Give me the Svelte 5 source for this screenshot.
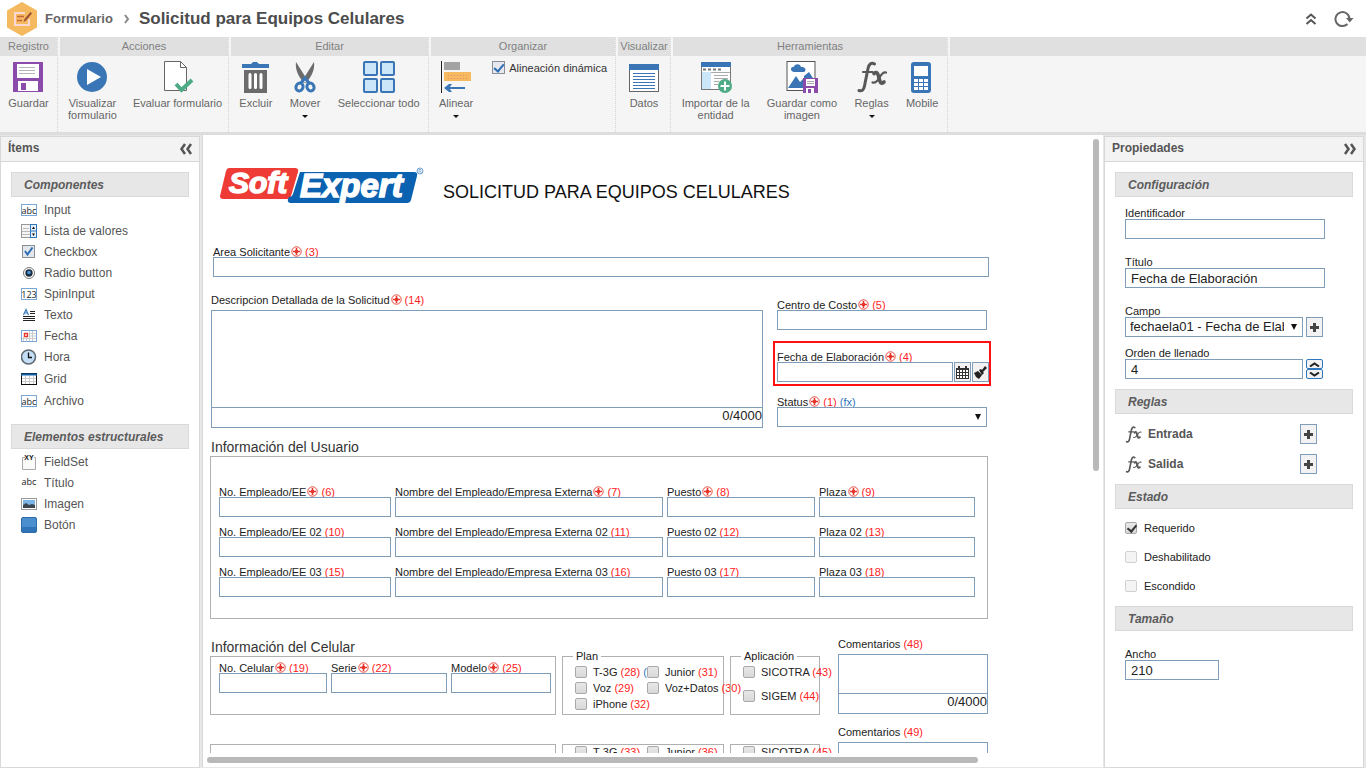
<script>
	let dynamicAlign = $state(true);
	let required = $state(true);
	let title = $state('Fecha de Elaboración');
	let order = $state(4);
	let width = $state('210');

	const components = [
		{ icon: 'input', name: 'Input' },
		{ icon: 'list', name: 'Lista de valores' },
		{ icon: 'check', name: 'Checkbox' },
		{ icon: 'radio', name: 'Radio button' },
		{ icon: 'spin', name: 'SpinInput' },
		{ icon: 'text', name: 'Texto' },
		{ icon: 'date', name: 'Fecha' },
		{ icon: 'hour', name: 'Hora' },
		{ icon: 'grid', name: 'Grid' },
		{ icon: 'input', name: 'Archivo' }
	];

	const structural = [
		{ icon: 'fieldset', name: 'FieldSet' },
		{ icon: 'title', name: 'Título' },
		{ icon: 'image', name: 'Imagen' },
		{ icon: 'button', name: 'Botón' }
	];

	const userFields = [
		{ label: 'No. Empleado/EE', n: 6, req: true },
		{ label: 'Nombre del Empleado/Empresa Externa', n: 7, req: true },
		{ label: 'Puesto', n: 8, req: true },
		{ label: 'Plaza', n: 9, req: true },
		{ label: 'No. Empleado/EE 02', n: 10 },
		{ label: 'Nombre del Empleado/Empresa Externa 02', n: 11 },
		{ label: 'Puesto 02', n: 12 },
		{ label: 'Plaza 02', n: 13 },
		{ label: 'No. Empleado/EE 03', n: 15 },
		{ label: 'Nombre del Empleado/Empresa Externa 03', n: 16 },
		{ label: 'Puesto 03', n: 17 },
		{ label: 'Plaza 03', n: 18 }
	];

	const phoneFields = [
		{ label: 'No. Celular', n: 19, req: true },
		{ label: 'Serie', n: 22, req: true },
		{ label: 'Modelo', n: 25, req: true }
	];
</script>

{#snippet mark()}
	<svg class="mark" width="11" height="11" viewBox="0 0 11 11">
		<circle cx="5.5" cy="5.5" r="4.7" fill="#fff" stroke="#e8352b" stroke-width="0.9" />
		<path d="M5.500 2v7M2 5.500h7" stroke="#e8352b" stroke-width="1.600" />
		<path d="M4 4h3v3H4z" fill="#e8352b" />
	</svg>
{/snippet}

{#snippet field(f)}
	<div class="field">
		<label for="f{f.n}">{f.label}{#if f.req}{@render mark()}{/if} <b>({f.n})</b></label>
		<input type="text" id="f{f.n}" />
	</div>
{/snippet}

{#snippet area(label, n, req)}
	<div class="field area">
		<label for="f{n}">{label}{#if req}{@render mark()}{/if} <b>({n})</b></label>
		<div class="counted">
			<textarea id="f{n}"></textarea>
			<span>0/4000</span>
		</div>
	</div>
{/snippet}

{#snippet tick(label, n, fx)}
	<label class="tick"><input type="checkbox" /><span>{label} <b>({n})</b>{#if fx}&nbsp;<i>(fx)</i>{/if}</span></label>
{/snippet}

{#snippet plus(label)}
	<button class="square" aria-label={label}>
		<svg width="11" height="11" viewBox="0 0 11 11"><path d="M5.500 1v9M1 5.500h9" stroke="#444" stroke-width="3" /></svg>
	</button>
{/snippet}

{#snippet fxIcon(w, h)}
	<svg width={w} height={h} viewBox="0 0 32 32" fill="none" stroke="#585858" stroke-linecap="round">
		<path d="M18.500 3c-3-2-5.500 0-6.500 4.500L8.500 25c-.8 4-2.500 5.500-5.500 4.500" stroke-width="3" />
		<path d="M7 11h9.500" stroke-width="2.200" />
		<path d="M18 12.500c3-2.500 4 0 5 4.500s2 6.500 5 4" stroke-width="3.600" />
		<path d="M30 11.500c-2.500-1-4.500 1.500-6.500 5s-4 6-7 5" stroke-width="2.200" />
	</svg>
{/snippet}

{#snippet itemIcon(kind)}
	<svg class="item-icon" width="16" height={kind === 'hour' || kind === 'grid' ? 18 : 16} viewBox="0 0 16 16">
		{#if kind === 'input'}
			<rect x="0.500" y="2.500" width="15" height="11" fill="#fff" stroke="#7ba7d7" />
			<text x="8" y="12" class="tiny">abc</text>
		{:else if kind === 'list'}
			<rect x="0.500" y="1.500" width="15" height="13" fill="#f4f4f4" stroke="#999" />
			<path d="M2 5.500h6M1 8.500h8M1 11.500h8" stroke="#bbb" />
			<rect x="9.500" y="1.500" width="6" height="13" fill="#e5f0fb" stroke="#2f77bd" />
			<path d="M9.500 8h6" stroke="#2f77bd" />
			<path d="M11 6l1.500-2.500L14 6zM11 10.500h3L12.500 13z" fill="#111" />
		{:else if kind === 'check'}
			<rect x="1.500" y="1.500" width="12" height="12" fill="#e2e7ee" stroke="#8a8f96" />
			<path d="M4 7l2.500 3.500 5-7" fill="none" stroke="#2f6db3" stroke-width="2" />
		{:else if kind === 'radio'}
			<circle cx="8" cy="8" r="5.500" fill="#fff" stroke="#777" />
			<circle cx="8" cy="8" r="3.700" fill="#1b2c40" />
			<circle cx="8" cy="7.500" r="1.800" fill="#4d94d6" />
		{:else if kind === 'spin'}
			<rect x="0.500" y="2.500" width="15" height="11" fill="#fff" stroke="#7ba7d7" />
			<text x="8" y="12" class="tiny">123</text>
		{:else if kind === 'text'}
			<path d="M2.500 8L5 2.500 7.500 8M3.500 6h3" fill="none" stroke="#3c7cc0" stroke-width="1.200" />
			<path d="M9 4.500h5M9 6.500h5M2 9.500h12M2 11.500h12M2 13.500h12" stroke="#222" />
		{:else if kind === 'date'}
			<rect x="0.500" y="2.500" width="15" height="11" fill="#fff" stroke="#7ba7d7" />
			<path d="M8.500 3v10M11.500 3v10M5.500 9v4M2.500 9v4M1 10.500h14M8 5.500h7M8 8h7" stroke="#ccc" />
			<rect x="3.500" y="5.500" width="3" height="3" fill="#fff" stroke="#e8352b" stroke-width="1.400" />
		{:else if kind === 'hour'}
			<circle cx="7.500" cy="8" r="7" fill="#c4dff5" stroke="#5f6a74" stroke-width="1.600" />
			<path d="M7.500 3.500v5h3.500" fill="none" stroke="#111" stroke-width="1.300" />
		{:else if kind === 'grid'}
			<rect x="0.500" y="2.500" width="15" height="11" fill="#fff" stroke="#111" />
			<path d="M4.500 5v8M8.500 5v8M12.500 5v8M1 7.500h14M1 10.500h14" stroke="#ccc" />
			<path d="M0 3.500h16" stroke="#1260a8" stroke-width="2" />
		{:else if kind === 'fieldset'}
			<path d="M4 3.500H1.500v12h13v-12H13" fill="#fafafa" stroke="#aaa" />
			<text x="8" y="6" class="xy">XY</text>
		{:else if kind === 'title'}
			<text x="8" y="10" class="tiny">abc</text>
		{:else if kind === 'image'}
			<rect x="0.500" y="2.500" width="15" height="11" fill="#fff" stroke="#999" />
			<rect x="2" y="4" width="12" height="8" fill="#7db4e6" />
			<path d="M2 12V9l3-2 3 2 3-1 3 1v3z" fill="#3d464f" />
		{:else if kind === 'button'}
			<rect x="0.500" y="0.500" width="15" height="15" rx="1.500" fill="#4b8fcf" stroke="#2c6cab" />
			<path d="M1 10h14v5H1z" fill="#2f74b8" />
		{/if}
	</svg>
{/snippet}

{#snippet itemList(items)}
	<ul>
		{#each items as item}
			<li>{@render itemIcon(item.icon)}{item.name}</li>
		{/each}
	</ul>
{/snippet}

<div class="app">
	<header>
		<svg width="30" height="34" viewBox="0 0 30 34">
			<path d="M15 1l14 8v16l-14 8-14-8V9z" fill="#f5b95f" stroke="#f5b95f" stroke-width="2" stroke-linejoin="round" />
			<path d="M22 17v6H8V11h10" fill="none" stroke="#fbd9d2" stroke-width="2" />
			<path d="M10 14.500h7M10 18.500h5" stroke="#c8643c" stroke-width="1.500" />
			<path d="M16.500 20l1-3 6-7 1.500 1.500-6 7z" fill="#9c5030" />
		</svg>
		<a href="#formulario">Formulario</a>
		<svg class="crumb" width="6" height="10" viewBox="0 0 6 10"><path d="M1 1l3 4-3 4" fill="none" stroke="#888" stroke-width="2" /></svg>
		<h1>Solicitud para Equipos Celulares</h1>
		<button class="plain" aria-label="Contraer">
			<svg width="12" height="14" viewBox="0 0 12 14" fill="none" stroke="#555" stroke-width="2"><path d="M1.500 6.500L6 2.500l4.500 4M1.500 12L6 8l4.500 4" /></svg>
		</button>
		<button class="plain" aria-label="Actualizar">
			<svg width="20" height="18" viewBox="0 0 20 18">
				<path d="M13.500 14A7 7 0 1 1 15.500 9" fill="none" stroke="#666" stroke-width="2" />
				<path d="M12 8h7.500l-3.700 4.500z" fill="#666" />
			</svg>
		</button>
	</header>

	<nav class="ribbon">
		<section class="g-registro">
			<h2>Registro</h2>
			<div class="tools">
				<button class="tool">
					<svg width="32" height="32" viewBox="0 0 32 32">
						<path d="M1 1h30v30H1z" fill="#8b4bab" />
						<path d="M5 3h22v14H5z" fill="#fff" />
						<path d="M7 6.500h16M7 9.500h16M7 12.500h16" stroke="#b5b5b5" />
						<path d="M6 20h20v10H6z" fill="#fff" />
						<path d="M9 22h5v7H9z" fill="#8b4bab" />
					</svg>
					Guardar
				</button>
			</div>
		</section>
		<section class="g-acciones">
			<h2>Acciones</h2>
			<div class="tools">
				<button class="tool">
					<svg width="32" height="32" viewBox="0 0 32 32"><circle cx="16" cy="16" r="15" fill="#3a76b5" /><path d="M11 8v16l14-8z" fill="#fff" /></svg>
					Visualizar<br />formulario
				</button>
				<button class="tool">
					<svg width="32" height="32" viewBox="0 0 32 32">
						<path d="M2.500 0.500h16l6 6v23h-22z" fill="#fff" stroke="#666" />
						<path d="M18.500 0.500v6h6" fill="none" stroke="#666" />
						<path d="M14 23l5.500 6L30 19" fill="none" stroke="#4dab85" stroke-width="4" />
					</svg>
					Evaluar formulario
				</button>
			</div>
		</section>
		<section class="g-editar">
			<h2>Editar</h2>
			<div class="tools">
				<button class="tool">
					<svg width="32" height="32" viewBox="0 0 32 32">
						<path d="M2 3h9l2-2h4l2 2h10v4H2z" fill="#3a76b5" />
						<path d="M4 9h23v23H4z" fill="#6b6b6b" />
						<path d="M10 13.500v13M15.500 13.500v13M21 13.500v13" stroke="#fff" stroke-width="3" stroke-linecap="round" />
					</svg>
					Excluir
				</button>
				<button class="tool">
					<svg width="32" height="32" viewBox="0 0 32 32">
						<path d="M7 1l12 19-4 2C9 15 6 8 7 1zM25 1L13 20l4 2C23 15 26 8 25 1z" fill="#6b6b6b" />
						<g fill="none" stroke="#3a76b5" stroke-width="3"><ellipse cx="10.500" cy="26" rx="3.500" ry="4" transform="rotate(25 10.500 26)" /><ellipse cx="21.500" cy="26" rx="3.500" ry="4" transform="rotate(-25 21.500 26)" /><path d="M12 22l4-5 4 5" /></g>
					</svg>
					Mover
					<span class="drop"></span>
				</button>
				<button class="tool">
					<svg width="32" height="32" viewBox="0 0 32 32" fill="#cbe6f8" stroke="#3a76b5" stroke-width="2">
						<rect x="1" y="1" width="13" height="13" rx="1" /><rect x="18" y="1" width="13" height="13" rx="1" />
						<rect x="1" y="18" width="13" height="13" rx="1" /><rect x="18" y="18" width="13" height="13" rx="1" />
					</svg>
					Seleccionar todo
				</button>
			</div>
		</section>
		<section class="g-organizar">
			<h2>Organizar</h2>
			<div class="tools start">
				<button class="tool">
					<svg width="32" height="32" viewBox="0 0 32 32">
						<path d="M1.500 0v32" stroke="#222" />
						<path d="M4 1h16v8H4z" fill="#a3a3a3" />
						<path d="M4 11h27v9H4z" fill="#f5b95f" />
						<path d="M8 14.500h21M8 17.500h21" stroke="#eb8a6a" stroke-dasharray="1 2" />
						<path d="M6 27h19" stroke="#3a76b5" stroke-width="2" />
						<path d="M4 27l5-4h3l-3 4 3 4H9z" fill="#3a76b5" />
					</svg>
					Alinear
					<span class="drop"></span>
				</button>
				<label class="align"><input type="checkbox" bind:checked={dynamicAlign} />Alineación dinámica</label>
			</div>
		</section>
		<section class="g-visualizar">
			<h2>Visualizar</h2>
			<div class="tools">
				<button class="tool">
					<svg width="32" height="32" viewBox="0 0 32 32">
						<rect x="1.500" y="4.500" width="29" height="26" fill="#fff" stroke="#666" />
						<path d="M1 3h30v6H1z" fill="#3a76b5" />
						<path d="M5 12.500h22M5 15.500h22M5 18.500h22M5 21.500h22M5 24.500h22M5 27.500h22" stroke="#3a76b5" />
					</svg>
					Datos
				</button>
			</div>
		</section>
		<section class="g-herramientas">
			<h2>Herramientas</h2>
			<div class="tools">
				<button class="tool">
					<svg width="32" height="32" viewBox="0 0 32 32">
						<rect x="1.500" y="1.500" width="29" height="27" fill="#fff" stroke="#777" />
						<path d="M1 1h30v5H1z" fill="#3a76b5" />
						<path d="M3 8.500h19" stroke="#777" stroke-width="2" stroke-dasharray="3 2" />
						<path d="M2 11h9v17H2z" fill="#cbe6f8" />
						<path d="M11 11.500h19M14 14.500h14M14 17.500h14M14 20.500h5M14 23.500h4" stroke="#aaa" />
						<circle cx="25" cy="25" r="7" fill="#4dab85" />
						<path d="M25 20.500v9M20.500 25h9" stroke="#fff" stroke-width="2" />
					</svg>
					Importar de la<br />entidad
				</button>
				<button class="tool">
					<svg width="32" height="32" viewBox="0 0 32 32">
						<rect x="1" y="0.500" width="28" height="29" fill="#fff" stroke="#555" />
						<path d="M8 11c-5-1-3-6 0-5 0-3 6-4 7 0 5-1 6 5 2 5z" fill="#3a76b5" />
						<path d="M2 27l8-12 4 6 3-3v9zM18 15l5-4 4 6h-9z" fill="#3a76b5" />
						<path d="M17 17h15v15H17z" fill="#8b4bab" />
						<path d="M20 18h9v7h-9zM20 27h8v5h-8z" fill="#fff" />
						<path d="M21 20.500h7M21 22.500h7" stroke="#aaa" />
						<path d="M22 28h3v4h-3z" fill="#8b4bab" />
					</svg>
					Guardar como<br />imagen
				</button>
				<button class="tool">
					{@render fxIcon(32, 32)}
					Reglas
					<span class="drop"></span>
				</button>
				<button class="tool">
					<svg width="32" height="32" viewBox="0 0 32 32">
						<rect x="5" y="1" width="20" height="31" rx="3" fill="#3a76b5" />
						<path d="M8 5h14v10H8z" fill="#fff" />
						<path d="M8 19.500h14M8 23.500h14M8 27.500h14" stroke="#fff" stroke-width="3" stroke-dasharray="4 1" />
					</svg>
					Mobile
				</button>
			</div>
		</section>
		<section class="rest"><h2></h2></section>
	</nav>

	<main>
		<aside class="items">
			<div class="panel-title">
				<h2>Ítems</h2>
				<button class="plain" aria-label="Ocultar ítems">
					<svg width="14" height="12" viewBox="0 0 14 12" fill="none" stroke="#555" stroke-width="2.500"><path d="M6 1L2.500 6 6 11M12 1L8.500 6l3.500 5" /></svg>
				</button>
			</div>
			<h3>Componentes</h3>
			{@render itemList(components)}
			<h3>Elementos estructurales</h3>
			{@render itemList(structural)}
		</aside>

		<div class="canvas">
			<div class="viewport">
				<form>
					<div class="form-head">
						<svg width="206" height="40" viewBox="0 0 206 40">
							<path d="M9 1h66q4 0 3 4l-7 24q-1 3-4 3H3q-3 0-3-3L6 4q1-3 3-3z" fill="#ee3b35" />
							<path d="M80 5h114q4 0 3 4l-6 24q-1 3-4 3H71q-4 0-3-4l1-2q3 0 4-3z" fill="#0b62b1" />
							<text x="9" y="26" class="logo soft">Soft</text>
							<text x="80" y="30" class="logo">Expert</text>
							<circle cx="200" cy="4" r="3" fill="#fff" stroke="#4b8ac4" stroke-width="0.800" />
							<path d="M199 6V2.500h1.500q1 1 0 1.700l1 1.800" fill="none" stroke="#4b8ac4" stroke-width="0.700" />
						</svg>
						<h2>SOLICITUD PARA EQUIPOS CELULARES</h2>
					</div>

					<div class="requester">{@render field({ label: 'Area Solicitante', n: 3, req: true })}</div>

					<div class="details">
						{@render area('Descripcion Detallada de la Solicitud', 14, true)}
						<div class="side">
							<div class="inset">{@render field({ label: 'Centro de Costo', n: 5, req: true })}</div>
							<div class="field selected">
								<label for="f4">Fecha de Elaboración{@render mark()} <b>(4)</b></label>
								<div class="line">
									<input type="text" id="f4" />
									<button type="button" class="square" aria-label="Calendario">
										<svg width="13" height="13" viewBox="0 0 13 13">
											<path d="M0 2h13v11H0zM2 0h2v3H2zM9 0h2v3H9z" fill="#333" />
											<path d="M1 5h11M1 8h11M1 11h11" stroke="#fff" stroke-width="2" stroke-dasharray="2 1" />
										</svg>
									</button>
									<button type="button" class="square" aria-label="Limpiar">
										<svg width="13" height="13" viewBox="0 0 13 13"><path d="M0 7l4-2 4 4-3 4-3-2zM5 4l2-1 1 1 3-4 2 2-4 4 1 1-2 2z" fill="#222" /></svg>
									</button>
								</div>
							</div>
							<div class="field inset">
								<label for="f1">Status{@render mark()} <b>(1)</b> <i>(fx)</i></label>
								<div class="pick"><select id="f1"><option></option></select></div>
							</div>
						</div>
					</div>

					<h4>Información del Usuario</h4>
					<div class="box user">
						{#each userFields as f}
							{@render field(f)}
						{/each}
					</div>

					<div class="phone-row">
						<div>
							<h4>Información del Celular</h4>
							<div class="box phone">
								{#each phoneFields as f}
									{@render field(f)}
								{/each}
							</div>
						</div>
						<fieldset class="plan">
							<legend>Plan</legend>
							<div class="ticks">
								{@render tick('T-3G', 28, true)}
								{@render tick('Junior', 31)}
								{@render tick('Voz', 29)}
								{@render tick('Voz+Datos', 30)}
								{@render tick('iPhone', 32)}
							</div>
						</fieldset>
						<fieldset class="apps">
							<legend>Aplicación</legend>
							<div class="ticks">
								{@render tick('SICOTRA', 43)}
								{@render tick('SIGEM', 44)}
							</div>
						</fieldset>
						<div class="comments">{@render area('Comentarios', 48)}</div>
					</div>

					<div class="phone-row">
						<div class="box phone"></div>
						<fieldset class="plan">
							<div class="ticks">
								{@render tick('T-3G', 33)}
								{@render tick('Junior', 36)}
							</div>
						</fieldset>
						<fieldset class="apps">
							<div class="ticks">
								{@render tick('SICOTRA', 45)}
							</div>
						</fieldset>
						<div class="comments">{@render area('Comentarios', 49)}</div>
					</div>
				</form>
			</div>
			<div class="vbar"><div></div></div>
			<div class="hbar"><div></div></div>
		</div>

		<aside class="props">
			<div class="panel-title">
				<h2>Propiedades</h2>
				<button class="plain" aria-label="Ocultar propiedades">
					<svg width="14" height="12" viewBox="0 0 14 12" fill="none" stroke="#555" stroke-width="2.500"><path d="M2 1l3.500 5L2 11M8 1l3.500 5L8 11" /></svg>
				</button>
			</div>

			<h3>Configuración</h3>
			<div class="config">
				<div class="field">
					<label for="ident">Identificador</label>
					<input type="text" id="ident" />
				</div>
				<div class="field">
					<label for="titulo">Título</label>
					<input type="text" id="titulo" bind:value={title} />
				</div>
				<div class="field">
					<label for="campo">Campo</label>
					<div class="line">
						<div class="pick"><select id="campo"><option>fechaela01 - Fecha de Elaboración</option></select></div>
						{@render plus('Agregar campo')}
					</div>
				</div>
				<div class="field order">
					<label for="orden">Orden de llenado</label>
					<div class="line">
						<input type="text" id="orden" bind:value={order} />
						<div class="spin">
							<button aria-label="Subir" onclick={() => order++}><svg width="11" height="5" viewBox="0 0 11 5"><path d="M1 4.500l4.500-3 4.500 3" fill="none" stroke="#222" stroke-width="2" /></svg></button>
							<button aria-label="Bajar" onclick={() => order--}><svg width="11" height="5" viewBox="0 0 11 5"><path d="M1 .5l4.500 3 4.500-3" fill="none" stroke="#222" stroke-width="2" /></svg></button>
						</div>
					</div>
				</div>
			</div>

			<h3>Reglas</h3>
			<div class="rules">
				<div class="rule">{@render fxIcon(17, 17)}<strong>Entrada</strong>{@render plus('Agregar regla de entrada')}</div>
				<div class="rule">{@render fxIcon(17, 17)}<strong>Salida</strong>{@render plus('Agregar regla de salida')}</div>
			</div>

			<h3>Estado</h3>
			<div class="states">
				<label class="tick"><input type="checkbox" bind:checked={required} />Requerido</label>
				<label class="tick"><input type="checkbox" disabled />Deshabilitado</label>
				<label class="tick"><input type="checkbox" disabled />Escondido</label>
			</div>

			<h3>Tamaño</h3>
			<div class="size field">
				<label for="ancho">Ancho</label>
				<input type="text" id="ancho" bind:value={width} />
			</div>
		</aside>
	</main>
</div>

<style>
	:global(body) {
		margin: 0;
		background: #fff;
	}
	.app {
		display: flex;
		flex-direction: column;
		height: 100vh;
		overflow: hidden;
		font-family: "Liberation Sans", Arial, sans-serif;
		font-size: 11px;
		line-height: 12px;
		color: #222;
	}
	.app * {
		box-sizing: border-box;
	}
	button, input, textarea, select {
		font: inherit;
		color: inherit;
		margin: 0;
		padding: 0;
		border: 0;
		border-radius: 0;
		background: none;
		outline: none;
	}
	button {
		cursor: pointer;
	}
	h1, h2, h3, h4, ul {
		margin: 0;
		padding: 0;
	}
	.plain {
		display: flex;
	}

	/* top bar */
	header {
		display: flex;
		align-items: center;
		height: 37px;
		padding: 0 12px 0 7px;
		flex: none;
	}
	header a {
		margin-left: 8px;
		font-size: 13px;
		font-weight: bold;
		color: #666;
		text-decoration: none;
	}
	.crumb {
		margin: 0 9px 0 11px;
	}
	h1 {
		flex: 1;
		font-size: 17px;
		line-height: 20px;
		color: #4c4c4c;
	}
	header button + button {
		margin-left: 17px;
	}

	/* ribbon */
	.ribbon {
		display: flex;
		gap: 2px;
		flex: none;
		height: 98px;
		background: #f5f5f5;
		border-bottom: 3px solid #ddd;
	}
	.ribbon section {
		border-right: 1px dotted #d4d4d4;
	}
	.g-registro { width: 58px; }
	.g-acciones { width: 169px; }
	.g-editar { width: 198px; }
	.g-organizar { width: 185px; }
	.g-visualizar { width: 53px; }
	.g-herramientas { width: 275px; }
	.ribbon .rest {
		flex: 1;
		border: 0;
	}
	.ribbon h2 {
		height: 19px;
		background: #e0e0e0;
		font-size: 11px;
		font-weight: normal;
		line-height: 19px;
		text-align: center;
		color: #808080;
	}
	.tools {
		display: flex;
		justify-content: space-around;
		align-items: flex-start;
		padding-top: 5px;
	}
	.start {
		justify-content: flex-start;
	}
	.tool {
		display: flex;
		flex-direction: column;
		align-items: center;
		padding: 0 8px;
		color: #666;
		white-space: nowrap;
	}
	.tool svg {
		margin-bottom: 4px;
	}
	.drop {
		margin-top: 6px;
		border: 3px solid transparent;
		border-top-color: #111;
	}
	.align {
		display: flex;
		align-items: center;
		gap: 4px;
		margin: 0 0 0 11px;
		color: #333;
	}

	/* check boxes */
	input[type="checkbox"] {
		appearance: none;
		flex: none;
		width: 12px;
		height: 12px;
		border: 1px solid #a8a8a8;
		border-radius: 2px;
		background: linear-gradient(#e8e8e8, #d8d8d8);
	}
	input[type="checkbox"]:disabled {
		border-color: #d0d0d0;
		background: #f4f4f4;
	}
	input[type="checkbox"]:checked::after {
		content: "";
		display: block;
		width: 4px;
		height: 7px;
		margin: 0 0 0 3px;
		border: solid #333;
		border-width: 0 2px 2px 0;
		transform: rotate(40deg);
	}
	.align input[type="checkbox"] {
		width: 13px;
		height: 13px;
		border: 1px solid #8a8f96;
		border-radius: 0;
		background: #e6eaf0;
	}
	.align input[type="checkbox"]:checked::after {
		border-color: #2f6db3;
		height: 8px;
	}

	/* workspace */
	main {
		display: flex;
		flex: 1;
		min-height: 0;
		background: #e7e7e7;
	}
	aside {
		display: flex;
		flex-direction: column;
		flex: none;
		margin-top: 1px;
		border: 1px solid #d8d8d8;
		background: #fff;
	}
	.items { width: 200px; }
	.props {
		width: 260px;
		margin-right: 2px;
	}
	.panel-title {
		display: flex;
		justify-content: space-between;
		align-items: center;
		height: 25px;
		padding: 0 6px 0 7px;
		background: #f3f3f3;
		border-bottom: 1px solid #d8d8d8;
	}
	.panel-title h2 {
		font-size: 12px;
		line-height: 22px;
		align-self: flex-start;
		color: #555;
	}
	h3 {
		height: 25px;
		margin: 0 10px;
		padding-left: 12px;
		border: 1px solid #d9d9d9;
		background: #e7e7e7;
		font-size: 12px;
		font-style: italic;
		line-height: 24px;
		color: #5c5c5c;
	}
	.panel-title + h3 {
		margin-top: 10px;
	}
	ul {
		padding: 2px 20px 13px;
		list-style: none;
	}
	li {
		display: flex;
		align-items: center;
		gap: 7px;
		min-height: 21px;
		padding: 2px 0;
		font-size: 12px;
		color: #555;
	}
	.tiny {
		font-family: "Open Sans", "Liberation Sans", sans-serif;
		font-size: 9px;
		text-anchor: middle;
		fill: #222;
	}
	.xy {
		font-size: 7px;
		font-weight: bold;
		text-anchor: middle;
		fill: #111;
	}

	/* canvas and its scroll bars */
	.canvas {
		display: grid;
		grid-template-columns: 1fr 10px;
		grid-template-rows: 1fr 14px;
		flex: 1;
		min-width: 0;
		margin: 0 1px 1px 2px;
		border-left: 1px solid #d8d8d8;
		background: #fff;
	}
	.viewport {
		min-width: 0;
		overflow: hidden;
	}
	.vbar {
		padding-top: 4px;
	}
	.vbar div {
		width: 6px;
		height: 54%;
		border-radius: 3px;
		background: #b9b9b9;
	}
	.hbar {
		padding: 4px 0 4px 4px;
	}
	.hbar div {
		width: 87%;
		height: 6px;
		border-radius: 3px;
		background: #b9b9b9;
	}

	/* form */
	form {
		width: 781px;
		margin-left: 7px;
	}
	.form-head {
		display: flex;
		gap: 17px;
		height: 112px;
		padding: 32px 10px 0;
	}
	.form-head svg {
		overflow: visible;
	}
	.logo {
		font-size: 33px;
		font-weight: bold;
		font-style: italic;
		fill: #fff;
		stroke: #fff;
		stroke-width: 1.5px;
	}
	.soft {
		font-size: 30px;
	}
	.form-head h2 {
		font-size: 18px;
		font-weight: normal;
		line-height: 50px;
		color: #111;
	}
	.field {
		display: flex;
		flex-direction: column;
	}
	.field label {
		height: 10px;
		line-height: 10px;
		white-space: nowrap;
	}
	.field b, .tick b {
		font-weight: normal;
		color: #f22;
	}
	.field i, .tick i {
		font-style: normal;
		color: #2f77bd;
	}
	.mark {
		margin: -3px 0 0 1px;
		vertical-align: -1px;
	}
	.field input, select {
		width: 100%;
		height: 20px;
		border: 1px solid #7f9db9;
		background: #fff;
		padding: 0 5px;
		font-size: 13px;
	}
	select {
		appearance: none;
		padding: 0 18px 0 4px;
	}
	.pick {
		position: relative;
	}
	.pick::after {
		content: "";
		position: absolute;
		right: 6px;
		top: 7px;
		border: solid transparent;
		border-width: 6px 3px 0;
		border-top-color: #111;
	}
	.line {
		display: flex;
		gap: 1px;
	}
	.square {
		display: flex;
		align-items: center;
		justify-content: center;
		flex: none;
		width: 17px;
		height: 20px;
		border: 1px solid #7f9db9;
		background: #f2f2f2;
	}
	.area label {
		margin-bottom: 5px;
	}
	.counted {
		display: flex;
		flex-direction: column;
		height: 118px;
		border: 1px solid #7f9db9;
		font-size: 13px;
		line-height: 15px;
		text-align: right;
	}
	.counted textarea {
		flex: 1;
		min-height: 0;
		border-bottom: 1px solid #7f9db9;
		resize: none;
	}
	.counted span {
		height: 19px;
	}
	.requester {
		padding: 0 2px 0 3px;
	}
	.details {
		display: grid;
		grid-template-columns: 552px 218px;
		gap: 10px;
		margin: 18px 0 9px 1px;
	}
	.side {
		display: flex;
		flex-direction: column;
		gap: 11px;
		padding-top: 5px;
	}
	.inset {
		padding: 0 4px;
	}
	.selected {
		padding: 9px 0 2px 2px;
		border: 2px solid #f11;
	}
	.selected input {
		width: 176px;
	}
	h4 {
		height: 19px;
		margin-left: 1px;
		font-size: 14px;
		font-weight: normal;
		line-height: 20px;
		color: #333;
	}
	.box, fieldset {
		border: 1px solid #b0b0b0;
	}
	.box {
		display: grid;
		gap: 10px 4px;
		width: 778px;
	}
	.user {
		grid-template-columns: 172px 268px 148px 156px;
		height: 163px;
		padding: 30px 8px;
		align-content: start;
		margin-bottom: 18px;
	}
	.phone-row {
		display: flex;
		align-items: flex-end;
		gap: 6px;
		margin-bottom: 12px;
	}
	.phone {
		grid-template-columns: 108px 116px 100px;
		width: 346px;
		height: 59px;
		padding: 6px 8px;
		align-content: start;
	}
	fieldset {
		height: 59px;
		margin: 0;
		padding: 1px 0 0 12px;
		min-width: 0;
	}
	fieldset:has(legend) {
		height: 64px;
		padding-top: 5px;
	}
	.plan { width: 162px; }
	.apps { width: 90px; }
	legend {
		margin-left: -2px;
		padding: 0 3px;
		line-height: 10px;
	}
	.ticks {
		display: grid;
		grid-template-columns: 72px 72px;
		grid-auto-rows: 16px;
	}
	.apps .ticks {
		grid-template-columns: 72px;
		grid-auto-rows: 24px;
	}
	.tick {
		display: flex;
		align-items: flex-start;
		gap: 6px;
		height: 16px;
		white-space: nowrap;
	}
	.comments {
		width: 150px;
		margin-left: 12px;
		padding-bottom: 1px;
	}
	.comments .counted {
		height: 60px;
	}

	/* properties */
	.config {
		display: grid;
		gap: 18px;
		width: 220px;
		padding: 11px 0 10px 20px;
	}
	.props .field label {
		height: 11px;
	}
	.config .line {
		gap: 3px;
	}
	.config .pick, .config .line input {
		width: 178px;
	}
	.order {
		margin-top: -7px;
	}
	.spin button {
		display: flex;
		align-items: center;
		justify-content: center;
		width: 17px;
		height: 10px;
		border: 1px solid #2f77bd;
		border-radius: 2px;
		background: #f2f2f2;
	}
	.rules {
		padding: 10px 46px 10px 20px;
	}
	.rule {
		display: flex;
		align-items: center;
		gap: 6px;
	}
	.rule + .rule {
		margin-top: 10px;
	}
	.rule strong {
		flex: 1;
		font-size: 12px;
		color: #555;
	}
	.states {
		display: grid;
		gap: 13px;
		padding: 11px 20px 12px;
	}
	.states .tick {
		align-items: center;
		gap: 7px;
	}
	.size {
		width: 114px;
		padding: 18px 0 0 20px;
	}
</style>
